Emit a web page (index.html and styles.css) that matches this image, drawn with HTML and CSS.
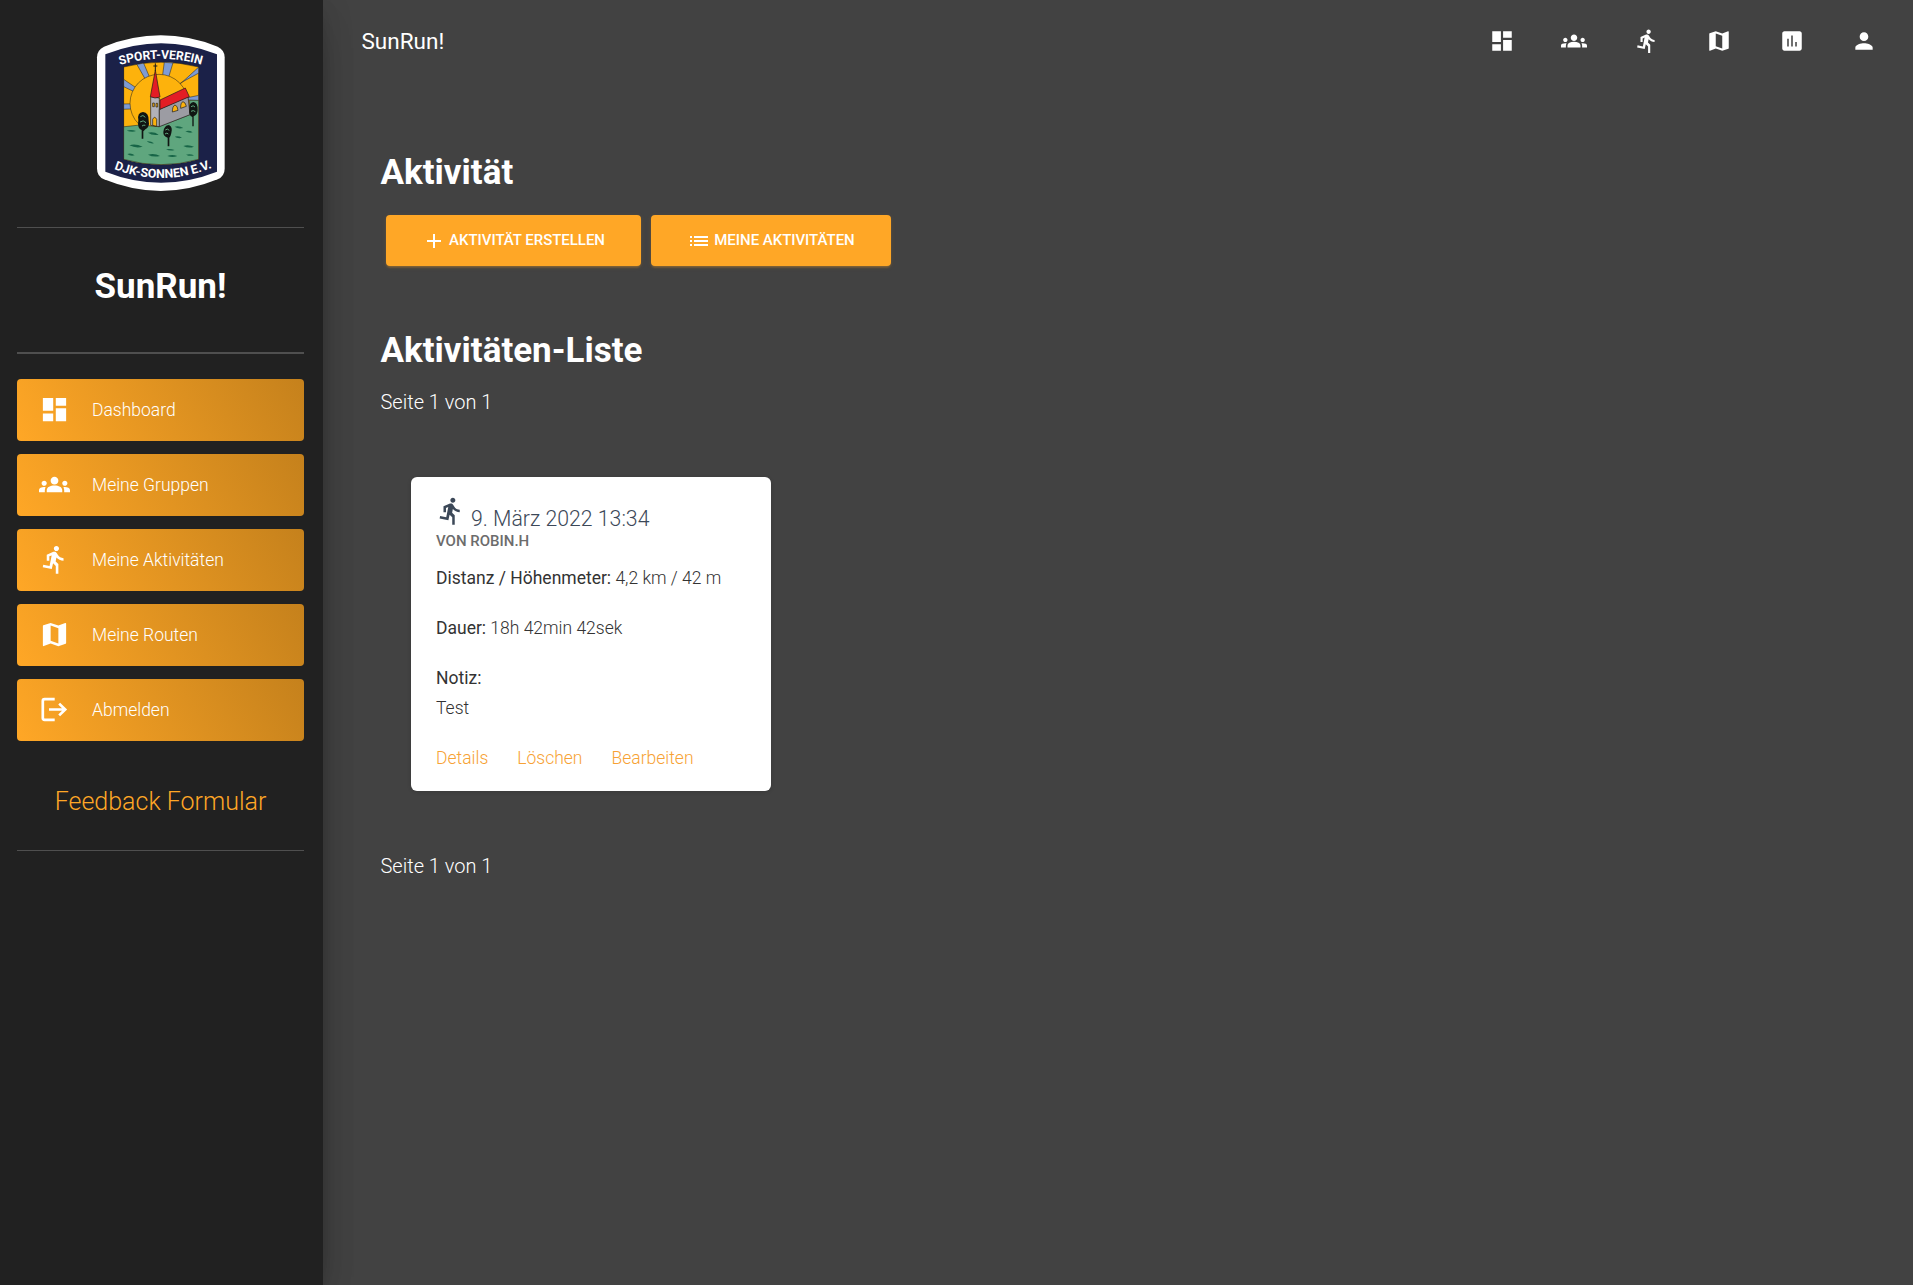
FILE: index.html
```html
<!DOCTYPE html>
<html lang="de">
<head>
<meta charset="utf-8">
<title>SunRun!</title>
<link rel="stylesheet" href="styles.css">
</head>
<body>
<svg class="sprite" aria-hidden="true">
  <symbol id="i-dashboard" viewBox="0 0 24 24"><path d="M3 13h8V3H3v10zm0 8h8v-6H3v6zm10 0h8V11h-8v10zm0-18v6h8V3h-8z"/></symbol>
  <symbol id="i-groups" viewBox="0 0 24 24"><path d="M12 12.75c1.63 0 3.07.39 4.24.9 1.08.48 1.76 1.56 1.76 2.73V18H6v-1.61c0-1.18.68-2.26 1.76-2.73 1.17-.52 2.61-.91 4.24-.91zM4 13c1.1 0 2-.9 2-2s-.9-2-2-2-2 .9-2 2 .9 2 2 2zm1.13 1.1c-.37-.06-.74-.1-1.13-.1-.99 0-1.93.21-2.78.58C.48 14.9 0 15.62 0 16.43V18h4.5v-1.61c0-.83.23-1.61.63-2.29zM20 13c1.1 0 2-.9 2-2s-.9-2-2-2-2 .9-2 2 .9 2 2 2zm4 3.43c0-.81-.48-1.53-1.22-1.85-.85-.37-1.79-.58-2.78-.58-.39 0-.76.04-1.13.1.4.68.63 1.46.63 2.29V18H24v-1.57zM12 6c1.66 0 3 1.34 3 3s-1.34 3-3 3-3-1.34-3-3 1.34-3 3-3z"/></symbol>
  <symbol id="i-run" viewBox="0 0 24 24"><path d="M13.49 5.48c1.1 0 2-.9 2-2s-.9-2-2-2-2 .9-2 2 .9 2 2 2zm-3.6 13.9l1-4.4 2.1 2v6h2v-7.5l-2.1-2 .6-3c1.3 1.5 3.3 2.5 5.5 2.5v-2c-1.9 0-3.5-1-4.3-2.4l-1-1.6c-.4-.6-1-1-1.7-1-.3 0-.5.1-.8.1l-5.2 2.2v4.7h2v-3.4l1.8-.7-1.6 8.1-4.9-1-.4 2 7 1.4z"/></symbol>
  <symbol id="i-map" viewBox="0 0 24 24"><path d="M20.5 3l-.16.03L15 5.1 9 3 3.36 4.9c-.21.07-.36.25-.36.48V20.5c0 .28.22.5.5.5l.16-.03L9 18.9l6 2.1 5.64-1.9c.21-.07.36-.25.36-.48V3.5c0-.28-.22-.5-.5-.5zM15 19l-6-2.11V5l6 2.11V19z"/></symbol>
  <symbol id="i-chart" viewBox="0 0 24 24"><path d="M19 3H5c-1.1 0-2 .9-2 2v14c0 1.1.9 2 2 2h14c1.1 0 2-.9 2-2V5c0-1.1-.9-2-2-2zM9 17H7.6v-7H9v7zm3.7 0h-1.4V7h1.4v10zm3.7 0H15v-4h1.4v4z"/></symbol>
  <symbol id="i-person" viewBox="0 0 24 24"><path d="M12 12c2.21 0 4-1.79 4-4s-1.79-4-4-4-4 1.79-4 4 1.79 4 4 4zm0 2c-2.67 0-8 1.34-8 4v2h16v-2c0-2.66-5.33-4-8-4z"/></symbol>
  <symbol id="i-add" viewBox="0 0 24 24"><path d="M19 13h-6v6h-2v-6H5v-2h6V5h2v6h6v2z"/></symbol>
  <symbol id="i-list" viewBox="0 0 24 24"><path d="M3 13h2v-2H3v2zm0 4h2v-2H3v2zm0-8h2V7H3v2zm4 4h14v-2H7v2zm0 4h14v-2H7v2zM7 7v2h14V7H7z"/></symbol>
  <symbol id="i-logout" viewBox="0 0 31 31"><path fill="none" stroke="currentColor" stroke-width="2.7" d="M15.7 5.1H5.6a1.8 1.8 0 0 0-1.8 1.8v17.2a1.8 1.8 0 0 0 1.8 1.8h10.1M10 15.5h16.5M20.2 9.6l6 5.9-6 5.9"/></symbol>
</svg>

<aside class="sidebar">
  <div class="brand-logo">
    <svg class="crest" viewBox="48 42 390 474">
      <defs>
        <clipPath id="scene"><path d="M131 141Q243 112 356 141V418Q243 450 131 418z"/></clipPath>
        <path id="arc-top" d="M120 135Q243 98 368 135"/>
        <path id="arc-bottom" d="M97 445Q243 503 392 445"/>
      </defs>
      <path fill="#fff" d="M51 112Q51 90 72 80Q242 12 413 80Q434 90 434 112V446Q434 468 413 478Q242 548 72 478Q51 468 51 446z"/>
      <path fill="#1b2148" d="M76 103Q243 37 411 103V455Q243 521 76 455z"/>
      <g clip-path="url(#scene)">
        <path fill="#fdb20c" d="M125 110H360V440H125z"/>
        <g stroke="#1a1a1a" stroke-width="1.5" fill="#7e9bd3">
          <path d="M237 250L162 118H186L206 165zM237 250L254 118H282L268 165zM237 250L362 136V156L303 188zM237 250L125 174V197L152 210zM237 250L125 252V268L150 267zM237 250L362 225V242L324 240z"/>
        </g>
        <circle cx="237" cy="250" r="87" fill="#fdb20c" stroke="#1a1a1a" stroke-width="1.5"/>
        <path fill="#5fa67e" stroke="#1a1a1a" stroke-width="1.5" d="M125 321L180 315L236 320L329 284V241H360V445H125z"/>
        <g fill="#176547">
          <path d="M140 332q14-5 28 1q-10 5-28-1zM204 338q18-4 32 6q-20 3-32-6zM284 320q14-4 26 4q-16 4-26-4zM148 376q18-6 40 4q-20 6-40-4zM200 364q12-2 22 6q-14 2-22-6zM284 350q10-4 22 3q-12 4-22-3zM310 378q14-6 32 2q-16 6-32-2zM204 404q20-5 36 4q-20 5-36-4zM262 408q14-6 30 0q-14 6-30 0zM142 402q12-4 22 4q-14 3-22-4zM318 404q12-4 24 2q-12 4-24-2zM258 388q12-3 26 2q-14 4-26-2zM316 334q12-4 22 3q-10 4-22-3z"/>
        </g>
        <g stroke="#1a1a1a" stroke-width="2">
          <path fill="#b2b2b8" d="M212 230L238 234V320L212 316z"/>
          <path fill="#9c9ca3" d="M238 268L324 230L330 284L238 320z"/>
          <path fill="#e31d25" d="M226 150L240 231L225 234L211 230z"/>
          <path fill="#e31d25" d="M240 240L316 204L328 230L240 268z"/>
          <path fill="#fdb20c" d="M218 316V298q6-12 12 0V319zM277 276q0-18 8-21q8 2 9 16zM302 265q-1-17 7-20q7 1 10 14zM218 249h5v11h-5zM228 250h5v11h-5z"/>
        </g>
        <path fill="none" stroke="#1a1a1a" stroke-width="3" d="M226 152V130M220 138h12"/>
        <path d="M175 300q-4-22 14-24q18 2 17 26q4 18-10 26q-4 4-6 6v22h-5v-26q-14-4-10-30zM328 268q-2-20 12-22q14 2 13 24q0 14-12 19v30h-4v-28q-12-4-9-23zM250 336q2-20 17-21q12 6 7 24q-2 10-6 14v26h-5v-26q-14-4-13-17z" fill="#101512"/>
        <path d="M181 290q8-8 15 2M180 306q10-8 18 2M186 318q6-4 10-2M333 260q7-6 12 1M333 274q7-5 13 1M256 330q6-6 12 1M255 342q6-5 10 0" fill="none" stroke="#5fa67e" stroke-width="3"/>
      </g>
      <path fill="none" stroke="#1a1a1a" stroke-width="1.5" d="M131 141Q243 112 356 141V418Q243 450 131 418z"/>
      <text class="crest-text" textLength="248" lengthAdjust="spacingAndGlyphs"><textPath href="#arc-top" textLength="248" lengthAdjust="spacingAndGlyphs">SPORT-VEREIN</textPath></text>
      <text class="crest-text" textLength="302" lengthAdjust="spacingAndGlyphs"><textPath href="#arc-bottom" startOffset="5" textLength="302" lengthAdjust="spacingAndGlyphs">DJK-SONNEN E.V.</textPath></text>
    </svg>
  </div>
  <h1 class="brand-name">SunRun!</h1>
  <nav class="side-nav">
    <a class="side-link"><svg><use href="#i-dashboard"/></svg>Dashboard</a>
    <a class="side-link"><svg><use href="#i-groups"/></svg>Meine Gruppen</a>
    <a class="side-link"><svg><use href="#i-run"/></svg>Meine Aktivitäten</a>
    <a class="side-link"><svg><use href="#i-map"/></svg>Meine Routen</a>
    <a class="side-link"><svg><use href="#i-logout"/></svg>Abmelden</a>
  </nav>
  <a class="feedback">Feedback Formular</a>
</aside>

<div class="main">
  <header class="topbar">
    <span class="topbar-title">SunRun!</span>
    <nav class="topbar-nav">
      <a><svg><use href="#i-dashboard"/></svg></a>
      <a><svg><use href="#i-groups"/></svg></a>
      <a><svg><use href="#i-run"/></svg></a>
      <a><svg><use href="#i-map"/></svg></a>
      <a><svg><use href="#i-chart"/></svg></a>
      <a><svg><use href="#i-person"/></svg></a>
    </nav>
  </header>
  <main class="content">
    <h2 class="heading">Aktivität</h2>
    <div class="actions">
      <a class="btn btn-create"><svg><use href="#i-add"/></svg>Aktivität erstellen</a>
      <a class="btn btn-mine"><svg><use href="#i-list"/></svg>Meine Aktivitäten</a>
    </div>
    <h2 class="heading">Aktivitäten-Liste</h2>
    <p class="pager">Seite 1 von 1</p>
    <article class="card">
      <div class="card-head"><svg><use href="#i-run"/></svg><span class="card-date">9. März 2022 13:34</span></div>
      <div class="card-author">von robin.h</div>
      <p class="card-row"><b>Distanz / Höhenmeter:</b> 4,2 km / 42 m</p>
      <p class="card-row"><b>Dauer:</b> 18h 42min 42sek</p>
      <p class="card-row"><b>Notiz:</b><br>Test</p>
      <div class="card-links"><a>Details</a><a>Löschen</a><a>Bearbeiten</a></div>
    </article>
    <p class="pager">Seite 1 von 1</p>
  </main>
</div>
</body>
</html>
```
FILE: styles.css
```css
* { box-sizing: border-box; }

body {
  display: flex;
  min-height: 100vh;
  margin: 0;
  background: #424242;
  color: #fff;
  font: 300 20px/30px Roboto, "Liberation Sans", sans-serif;
}

h1, h2, p { margin: 0; }
svg { display: block; flex: none; fill: currentColor; }
.sprite { display: none; }

/* Sidebar */
.sidebar {
  flex: none;
  width: 323px;
  padding: 0 19px 0 17px;
  background: #212121;
  box-shadow: 0 20px 38px -15px rgba(0, 0, 0, .42), 0 5px 31px rgba(0, 0, 0, .12), 0 10px 12px -6px rgba(0, 0, 0, .2);
}

.brand-logo {
  display: flex;
  justify-content: center;
  height: 228px;
  padding-top: 34px;
  border-bottom: 1px solid #4f4f4f;
}

.crest { width: 130px; height: 158px; }
.crest-text { font: 700 37px Roboto, sans-serif; fill: #fff; }

.brand-name {
  height: 126px;
  padding-top: 39px;
  border-bottom: 2px solid #4f4f4f;
  font-size: 35px;
  line-height: 40px;
  font-weight: 700;
  text-align: center;
}

.side-nav {
  display: flex;
  flex-direction: column;
  gap: 13px;
  padding-top: 25px;
}

.side-link {
  display: flex;
  align-items: center;
  gap: 22px;
  height: 62px;
  padding: 0 0 1px 22px;
  border-radius: 4px;
  background: linear-gradient(60deg, #ffa726, #c5811c);
  font-size: 17.5px;
}

.side-link svg { width: 31px; height: 31px; margin-top: -1px; }

.feedback {
  display: block;
  height: 110px;
  padding-top: 41px;
  border-bottom: 1px solid #4f4f4f;
  color: #ffa726;
  font-size: 25px;
  line-height: 40px;
  text-align: center;
}

/* Main column */
.main { flex: 1; min-width: 0; }

.topbar {
  display: flex;
  justify-content: space-between;
  align-items: center;
  height: 82px;
  padding: 0 12.4px 0 38.5px;
}

.topbar-title { font-size: 22.5px; font-weight: 400; }
.topbar-nav { display: flex; }
.topbar-nav a { display: flex; justify-content: center; width: 72.5px; }
.topbar-nav svg { width: 26px; height: 26px; }

.content { padding: 71px 57.5px 0; }

.heading {
  font-size: 35px;
  line-height: 40px;
  font-weight: 700;
}

.actions {
  display: flex;
  gap: 10px;
  margin: 22px 0 65px 5.5px;
}

.btn {
  display: flex;
  align-items: center;
  justify-content: center;
  gap: 3px;
  height: 51px;
  padding-bottom: 2px;
  border-radius: 4px;
  background: #ffa726;
  box-shadow: 0 2px 2px rgba(255, 167, 38, .14), 0 3px 2px -2px rgba(255, 167, 38, .2), 0 1px 5px rgba(255, 167, 38, .12);
  font-size: 15px;
  font-weight: 500;
  letter-spacing: -.03px;
  text-transform: uppercase;
}

.btn-create { width: 255px; }
.btn-mine { width: 240px; }
.btn svg { width: 24px; height: 24px; margin-top: 3px; }

.pager { margin-top: 16px; }

.card {
  width: 360px;
  height: 314px;
  margin: 60px 0 60px 30.5px;
  padding: 19px 25px;
  border-radius: 6px;
  background: #fff;
  color: #333;
  font-size: 17.5px;
  box-shadow: 0 1px 4px rgba(0, 0, 0, .14);
}

.card-head { display: flex; gap: 5px; height: 35px; color: #3c4858; }
.card-head svg { width: 30px; height: 30px; }
.card-date { padding-top: 12px; font-size: 21.25px; line-height: 22px; }

.card-author {
  color: #6c6c6c;
  font-size: 15px;
  line-height: 20px;
  font-weight: 500;
  text-transform: uppercase;
}

.card-row { margin-bottom: 20px; }
.card-row b { font-weight: 400; }
.card-author + .card-row { margin-top: 12px; }
.card-links { display: flex; gap: 29px; color: #f7a234; }
```
